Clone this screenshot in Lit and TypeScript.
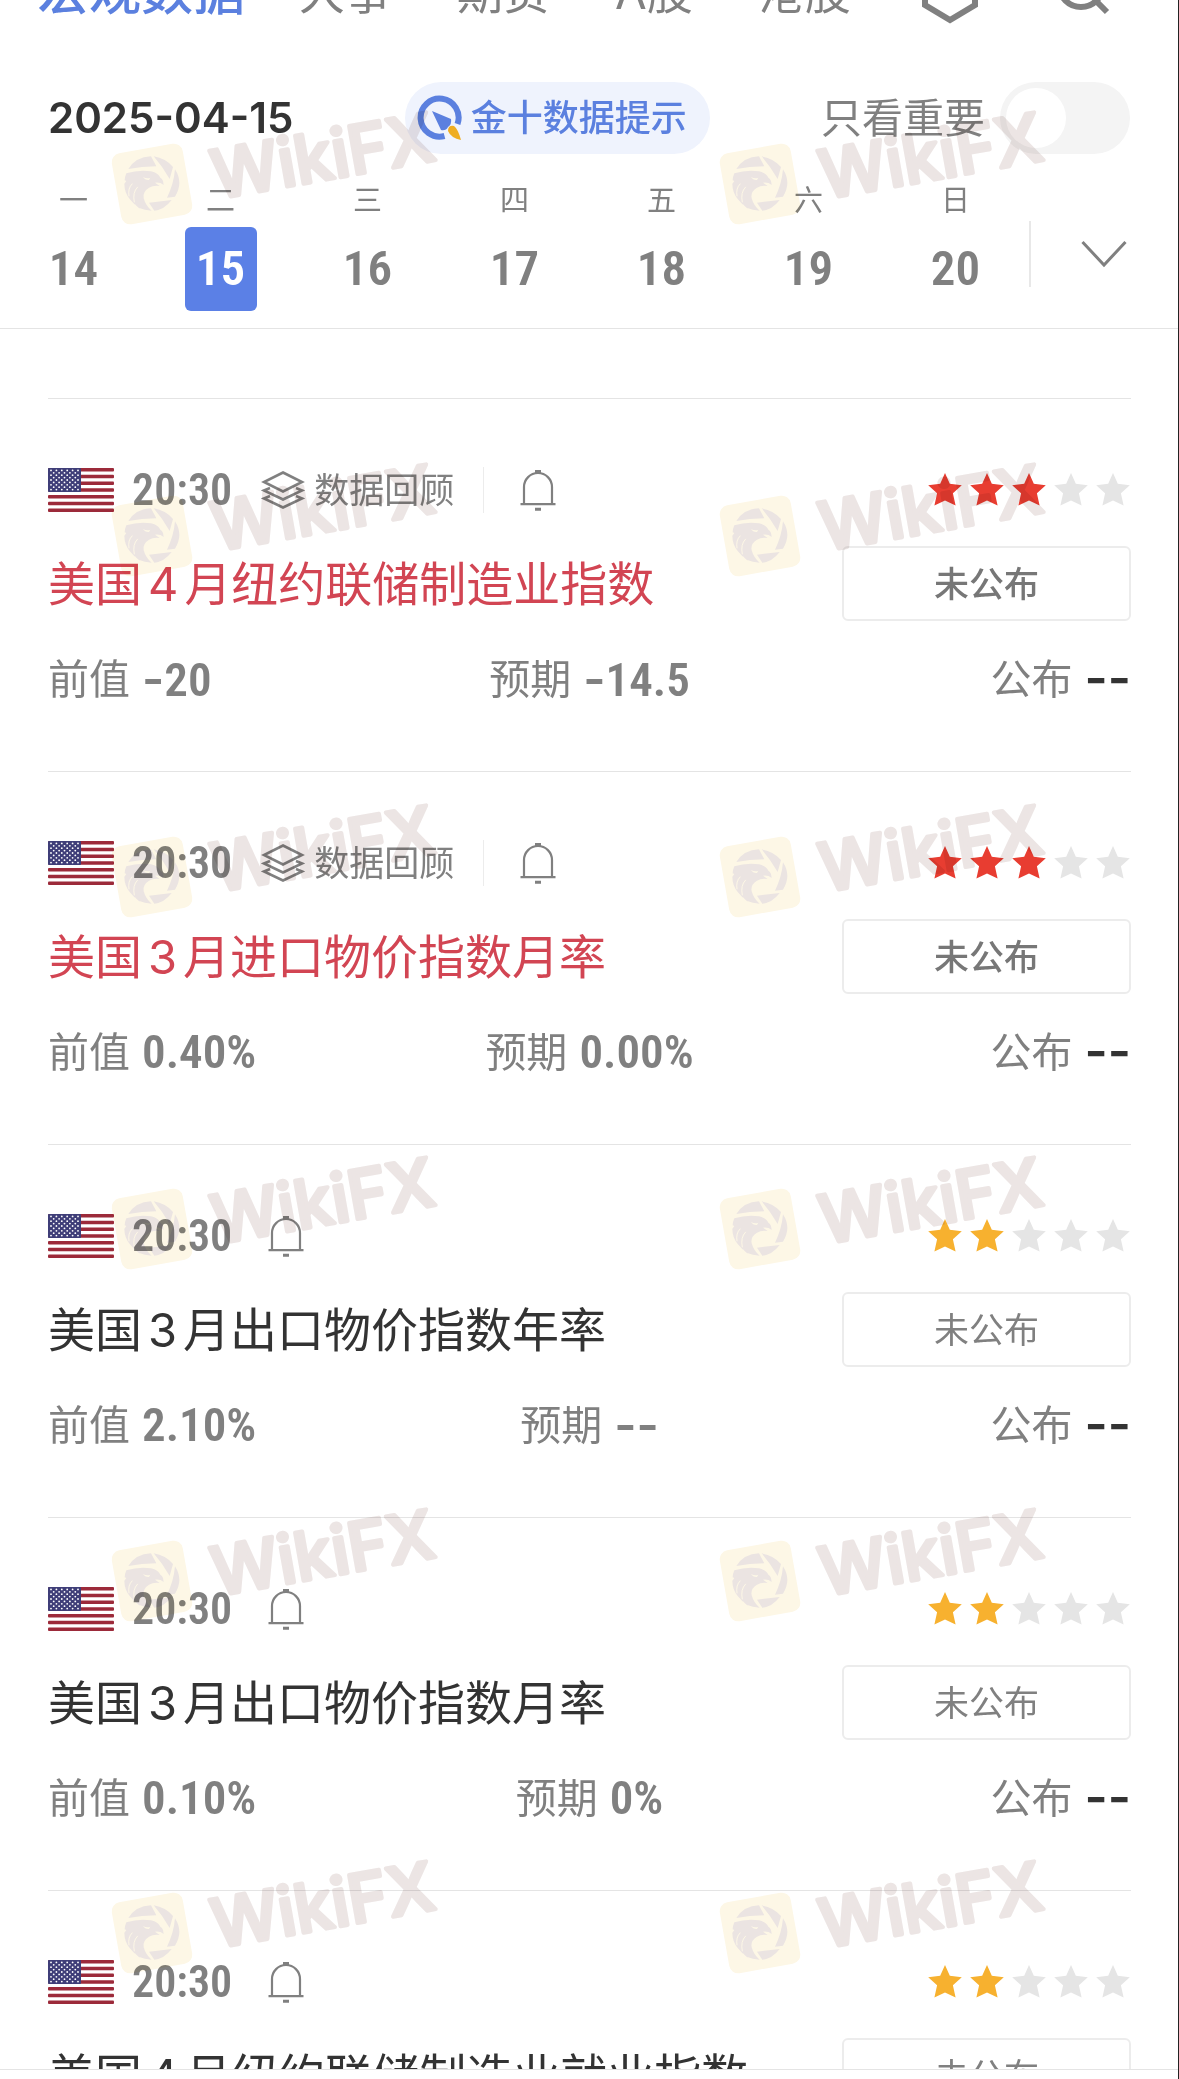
import { LitElement, html, css, svg, nothing } from "lit";
import { customElement, property, state } from "lit/decorators.js";
import { classMap } from "lit/directives/class-map.js";

interface Release {
  time: string;
  title: string;
  stars: number;
  review: boolean;
  previous: string;
  forecast: string;
  actual: string;
}

const RELEASES: Release[] = [
  { time: "20:30", title: "美国4月纽约联储制造业指数", stars: 3, review: true, previous: "-20", forecast: "-14.5", actual: "--" },
  { time: "20:30", title: "美国3月进口物价指数月率", stars: 3, review: true, previous: "0.40%", forecast: "0.00%", actual: "--" },
  { time: "20:30", title: "美国3月出口物价指数年率", stars: 2, review: false, previous: "2.10%", forecast: "--", actual: "--" },
  { time: "20:30", title: "美国3月出口物价指数月率", stars: 2, review: false, previous: "0.10%", forecast: "0%", actual: "--" },
  { time: "20:30", title: "美国4月纽约联储制造业就业指数", stars: 2, review: false, previous: "--", forecast: "--", actual: "--" },
];

const DAYS = [
  ["一", 14], ["二", 15], ["三", 16], ["四", 17], ["五", 18], ["六", 19], ["日", 20],
] as const;

const TABS = ["宏观数据", "大事", "期货", "A股", "港股"];

const range = (n: number) => Array.from({ length: n }, (_, i) => i);

/* Flag of the United States, 66 x 44 */
const flag = html`<svg class="flag" viewBox="0 0 66 44" role="img" aria-label="美国">
  <rect width="66" height="44" rx="2" fill="#fff"></rect>
  ${range(7).map((i) => svg`<rect y=${(i * 88) / 13} width="66" height=${44 / 13} rx="1" fill="#9c2a3a"></rect>`)}
  <rect width="33" height="24" rx="1" fill="#3f3e78"></rect>
  ${range(9).map((r) =>
    range(r % 2 ? 5 : 6).map(
      (c) => svg`<circle cx=${3 + c * 5.4 + (r % 2 ? 2.7 : 0)} cy=${2.4 + r * 2.4} r="0.9" fill="#fff"></circle>`
    )
  )}
</svg>`;

const layers = html`<svg class="layers" viewBox="0 0 44 40" fill="none" stroke="#808080" stroke-width="2.6" aria-hidden="true">
  <path d="M22 2.500 41 12 22 21.500 3 12Z"></path>
  <path d="M9 18 3 20.500 22 29.500 41 20.500 35 18"></path>
  <path d="M9 26 3 28.500 22 37.500 41 28.500 35 26"></path>
</svg>`;

const bell = html`<svg class="bell" viewBox="0 0 36 42" fill="none" stroke="#808080" stroke-width="2.200" aria-hidden="true">
  <path d="M4 35V18a14 14 0 0 1 28 0V35M.500 35.200H35.500"></path>
  <path d="M15 2.500H21M15 40.200H21" stroke-width="3"></path>
</svg>`;

@customElement("star-rating")
export class StarRating extends LitElement {
  @property({ type: Number }) value = 0;

  static styles = css`
    :host { display: flex; gap: 8px; }
    .star { width: 34px; height: 34px; fill: #e5e5e5; }
    .amber { fill: #f7b12f; }
    .red { fill: #e83d31; }
  `;

  render() {
    return range(5).map(
      (i) => html`<svg
        class=${classMap({ star: true, red: i < this.value && this.value > 2, amber: i < this.value && this.value < 3 })}
        viewBox="0 0 34 34" aria-hidden="true">
        <path d="M17 0 21.800 10.800 33.800 12.200 24.900 20.300 27.600 32.600 17 27.400 6.400 32.600 9.100 20.300 .200 12.200 12.200 10.800Z"></path>
      </svg>`
    );
  }
}

@customElement("release-item")
export class ReleaseItem extends LitElement {
  @property({ attribute: false }) item!: Release;

  static styles = css`
    :host {
      display: flex;
      flex-direction: column;
      flex: none;
      padding: 68px 0 64px;
      border-top: 1px solid #e4e4e4;
      color: #808080;
    }
    .meta { display: flex; align-items: center; height: 46px; }
    .flag { width: 66px; height: 44px; margin-right: 18px; }
    .number {
      font: 600 47px/48px "Roboto Condensed", "Liberation Sans Narrow", Roboto, sans-serif;
    }
    .time { font-size: 44px; }
    .dash { font: 600 48px/48px Inter, sans-serif; }
    .link {
      display: flex;
      align-items: center;
      gap: 9px;
      margin-left: 29px;
      padding-right: 29px;
      border-right: 1px solid #ececec;
      line-height: 46px;
      font-size: 35px;
      color: inherit;
      text-decoration: none;
    }
    .layers { width: 44px; height: 40px; }
    .alert { display: flex; margin-left: 36px; padding: 0; border: 0; background: none; }
    .bell { width: 36px; height: 42px; }
    .rating { margin: 0 1px 0 auto; }
    .main { display: flex; align-items: center; gap: 24px; margin-top: 33px; }
    .title {
      flex: 1;
      margin: 0;
      font-size: 47px;
      line-height: 74px;
      font-weight: 400;
      white-space: nowrap;
      color: #333;
    }
    .month { margin: 0 6px; }
    .hot { color: #d24553; }
    .status {
      box-sizing: border-box;
      width: 289px;
      height: 75px;
      border: 2px solid #ececec;
      border-radius: 6px;
      background: none;
      padding: 0;
      font: inherit;
      font-size: 35px;
      line-height: 48px;
      color: #808080;
    }
    .strong { font-weight: 500; color: #777; }
    .values {
      display: grid;
      grid-template-columns: 1fr auto 1fr;
      margin: 30px 0 0;
      line-height: 56px;
    }
    .value { display: flex; align-items: center; gap: 12px; font-size: 41px; height: 56px; }
    .last { justify-content: flex-end; }
    .value dd { margin: 0; }
    .last dd { color: #333; }
    .last .dash { font-size: 50px; }
  `;

  private figure(text: string) {
    const dashes = text.match(/^-+/)?.[0] ?? "";
    return html`<dd class="number">${dashes ? html`<span class="dash">${dashes}</span>` : nothing}${text.slice(dashes.length)}</dd>`;
  }

  private heading(text: string) {
    return text.split(/(\d+)/).map((part) => (/^\d+$/.test(part) ? html`<span class="month">${part}</span>` : part));
  }

  render() {
    const { time, title, stars, review, previous, forecast, actual } = this.item;
    const hot = stars > 2;
    return html`
      <div class="meta">
        ${flag}
        <time class="number time">${time}</time>
        ${review ? html`<a class="link" href="#review">${layers}数据回顾</a>` : nothing}
        <button class="alert" type="button" aria-label="提醒">${bell}</button>
        <star-rating class="rating" .value=${stars}></star-rating>
      </div>
      <div class="main">
        <h2 class=${classMap({ title: true, hot })}>${this.heading(title)}</h2>
        <button class=${classMap({ status: true, strong: hot })} type="button">未公布</button>
      </div>
      <dl class="values">
        <div class="value"><dt>前值</dt>${this.figure(previous)}</div>
        <div class="value"><dt>预期</dt>${this.figure(forecast)}</div>
        <div class="value last"><dt>公布</dt>${this.figure(actual)}</div>
      </dl>
    `;
  }
}

@customElement("brand-mark")
export class BrandMark extends LitElement {
  static styles = css`
    :host { display: block; width: 344px; height: 128px; }
    .mark { display: block; width: 100%; height: 100%; overflow: visible; }
    .word {
      font: 500 67px Inter, sans-serif;
      fill: #ece5e4;
      stroke: #ece5e4;
      stroke-width: 4px;
      stroke-linejoin: round;
    }
  `;

  render() {
    return html`<svg class="mark" viewBox="0 0 344 128" aria-hidden="true">
      <rect x="12" y="44" width="72" height="72" rx="9" fill="#fdf7e6" transform="rotate(-10 48 80)"></rect>
      <g transform="translate(48 80) scale(.3333) translate(-181 -169)" fill="#ebe4e2">
        <path d="M110 124Q132 88 178 86L194 116Q150 116 110 124Z"></path>
        <path d="M186 86Q222 92 244 118L234 154Q212 116 186 86Z"></path>
        <path d="M250 125Q276 165 250 207L226 210Q246 170 250 125Z"></path>
        <path d="M172 225 240 217Q218 246 188 249Z"></path>
        <path d="M104 137Q140 126 178 131Q200 136 206 150Q215 154 216 172Q206 163 190 165L204 175Q186 172 172 180Q152 192 156 212Q162 234 180 249Q158 248 143 241Q148 248 130 230Q132 234 114 214Q98 194 98 168L104 160L99 158Q99 148 104 137Z"></path>
        <path d="M154 148Q166 154 176 150L172 157Q160 158 154 148Z" fill="#fdf7e6"></path>
        <path d="M122 168Q108 182 112 206M138 178Q122 194 128 224" stroke="#fdf7e6" stroke-width="3" fill="none"></path>
      </g>
      <text class="word" x="112" y="95" transform="rotate(-10 112 95)">WikiFX</text>
    </svg>`;
  }
}

@customElement("app-root")
export class AppRoot extends LitElement {
  @state() private day = 15;

  static styles = css`
    :host {
      display: block;
      font-family: Inter, "Noto Sans CJK SC", sans-serif;
      color: #808080;
      background: #fff;
    }
    .app {
      position: relative;
      display: flex;
      flex-direction: column;
      box-sizing: border-box;
      height: 100vh;
      overflow: hidden;
      border-right: 1px solid #222;
    }
    .header { flex: none; border-bottom: 1px solid #e4e4e4; }
    .tabs {
      display: flex;
      align-items: flex-end;
      box-sizing: border-box;
      height: 20px;
      padding: 0 66px 0 37px;
    }
    .tab {
      margin-right: 66px;
      font-size: 46px;
      line-height: 56px;
      color: inherit;
      text-decoration: none;
      white-space: nowrap;
    }
    .current { margin-right: 54px; font-size: 52px; font-weight: 500; color: #5b80df; }
    .tool { display: flex; padding: 0; border: 0; background: none; }
    .hexagon { width: 56px; height: 64px; margin: 0 0 -4px 5px; }
    .search { width: 56px; height: 56px; margin: 0 0 5px auto; }
    .filters {
      display: flex;
      align-items: center;
      justify-content: space-between;
      margin-top: 62px;
      padding: 0 48px;
      height: 72px;
    }
    .date { margin: 0; font-size: 42px; font-weight: 600; line-height: 72px; color: #333; }
    .tip {
      display: flex;
      align-items: center;
      gap: 8px;
      height: 72px;
      padding: 0 23px 0 12px;
      border: 0;
      border-radius: 36px;
      background: #eff3fd;
      color: #5b80df;
      font: inherit;
      font-size: 36px;
      font-weight: 500;
      line-height: 48px;
    }
    .rocket { width: 46px; height: 46px; }
    .important { display: flex; align-items: center; gap: 15px; font-size: 41px; line-height: 72px; }
    .switch {
      appearance: none;
      display: flex;
      align-items: center;
      width: 130px;
      height: 72px;
      margin: 0;
      padding: 6px;
      box-sizing: border-box;
      border-radius: 36px;
      background: #f4f4f4;
    }
    .switch::before { content: ""; width: 60px; height: 60px; border-radius: 50%; background: #fff; }
    .switch:checked { justify-content: flex-end; background: #5b80df; }
    .calendar { display: flex; padding: 31px 0 17px; }
    .days { flex: 1; display: grid; grid-template-columns: repeat(7, 1fr); }
    .day {
      display: flex;
      flex-direction: column;
      align-items: center;
      gap: 10px;
      padding: 0;
      border: 0;
      background: none;
      color: inherit;
      font: inherit;
    }
    .weekday { font-size: 29px; line-height: 32px; }
    .number {
      width: 72px;
      border-radius: 6px;
      font: 600 49px/84px "Roboto Condensed", "Liberation Sans Narrow", Roboto, sans-serif;
    }
    .selected { background: #5b80e6; color: #fff; }
    .more {
      display: flex;
      align-items: center;
      justify-content: center;
      width: 149px;
      height: 66px;
      margin-top: 36px;
      padding: 0 2px 0 0;
      border: 0;
      border-left: 2px solid #e8e8e8;
      background: none;
    }
    .chevron { width: 46px; height: 28px; }
    .list {
      flex: 1;
      display: flex;
      flex-direction: column;
      min-height: 0;
      overflow: hidden;
      padding: 69px 47px 0 48px;
      border-bottom: 1px solid #e4e4e4;
    }
    .footer { flex: none; height: 9px; }
    .marks {
      position: absolute;
      top: 104px;
      left: 104px;
      display: grid;
      grid-template-columns: repeat(2, 344px);
      grid-template-rows: 352px 341px 352px 352px 352px 128px;
      column-gap: 264px;
      mix-blend-mode: multiply;
      pointer-events: none;
    }
  `;

  render() {
    return html`<div class="app">
      <header class="header">
        <nav class="tabs">
          ${TABS.map((t, i) => html`<a class=${classMap({ tab: true, current: i === 0 })} href="#${t}">${t}</a>`)}
          <button class="tool" type="button" aria-label="设置">
            <svg class="hexagon" viewBox="0 0 56 64" fill="none" stroke="#808080" stroke-width="6">
              <path d="M28 4 53 19V45L28 60 3 45V19Z"></path>
            </svg>
          </button>
          <button class="tool search" type="button" aria-label="搜索">
            <svg viewBox="0 0 56 56" fill="none" stroke="#808080" stroke-width="6">
              <circle cx="25" cy="26" r="22"></circle>
              <path d="M38 40 51 53"></path>
            </svg>
          </button>
        </nav>
        <div class="filters">
          <h1 class="date">2025-04-15</h1>
          <button class="tip" type="button">
            <svg class="rocket" viewBox="0 0 46 46" aria-hidden="true">
              <path d="M27.500 41A19 19 0 1 1 40.500 29" fill="none" stroke="#5b80df" stroke-width="6"></path>
              <path d="M15 16 34 24Q35 29 31 32 29 36 24 35Z" fill="#5b80df"></path>
              <path d="M31 36Q31 30 37 31 41 34 44 45 34 43 31 36Z" fill="#efad22"></path>
            </svg>
            金十数据提示
          </button>
          <label class="important">只看重要<input class="switch" type="checkbox" role="switch" /></label>
        </div>
        <div class="calendar">
          <div class="days">
            ${DAYS.map(
              ([name, n]) => html`<button class="day" type="button" @click=${() => (this.day = n)}>
                <span class="weekday">${name}</span>
                <span class=${classMap({ number: true, selected: n === this.day })}>${n}</span>
              </button>`
            )}
          </div>
          <button class="more" type="button" aria-label="展开日历">
            <svg class="chevron" viewBox="0 0 46 28" fill="none" stroke="#808080" stroke-width="3">
              <path d="M1.500 2 23 25 44.500 2"></path>
            </svg>
          </button>
        </div>
      </header>
      <main class="list">${RELEASES.map((r) => html`<release-item .item=${r}></release-item>`)}</main>
      <footer class="footer"></footer>
      <div class="marks">${range(12).map(() => html`<brand-mark></brand-mark>`)}</div>
    </div>`;
  }
}
